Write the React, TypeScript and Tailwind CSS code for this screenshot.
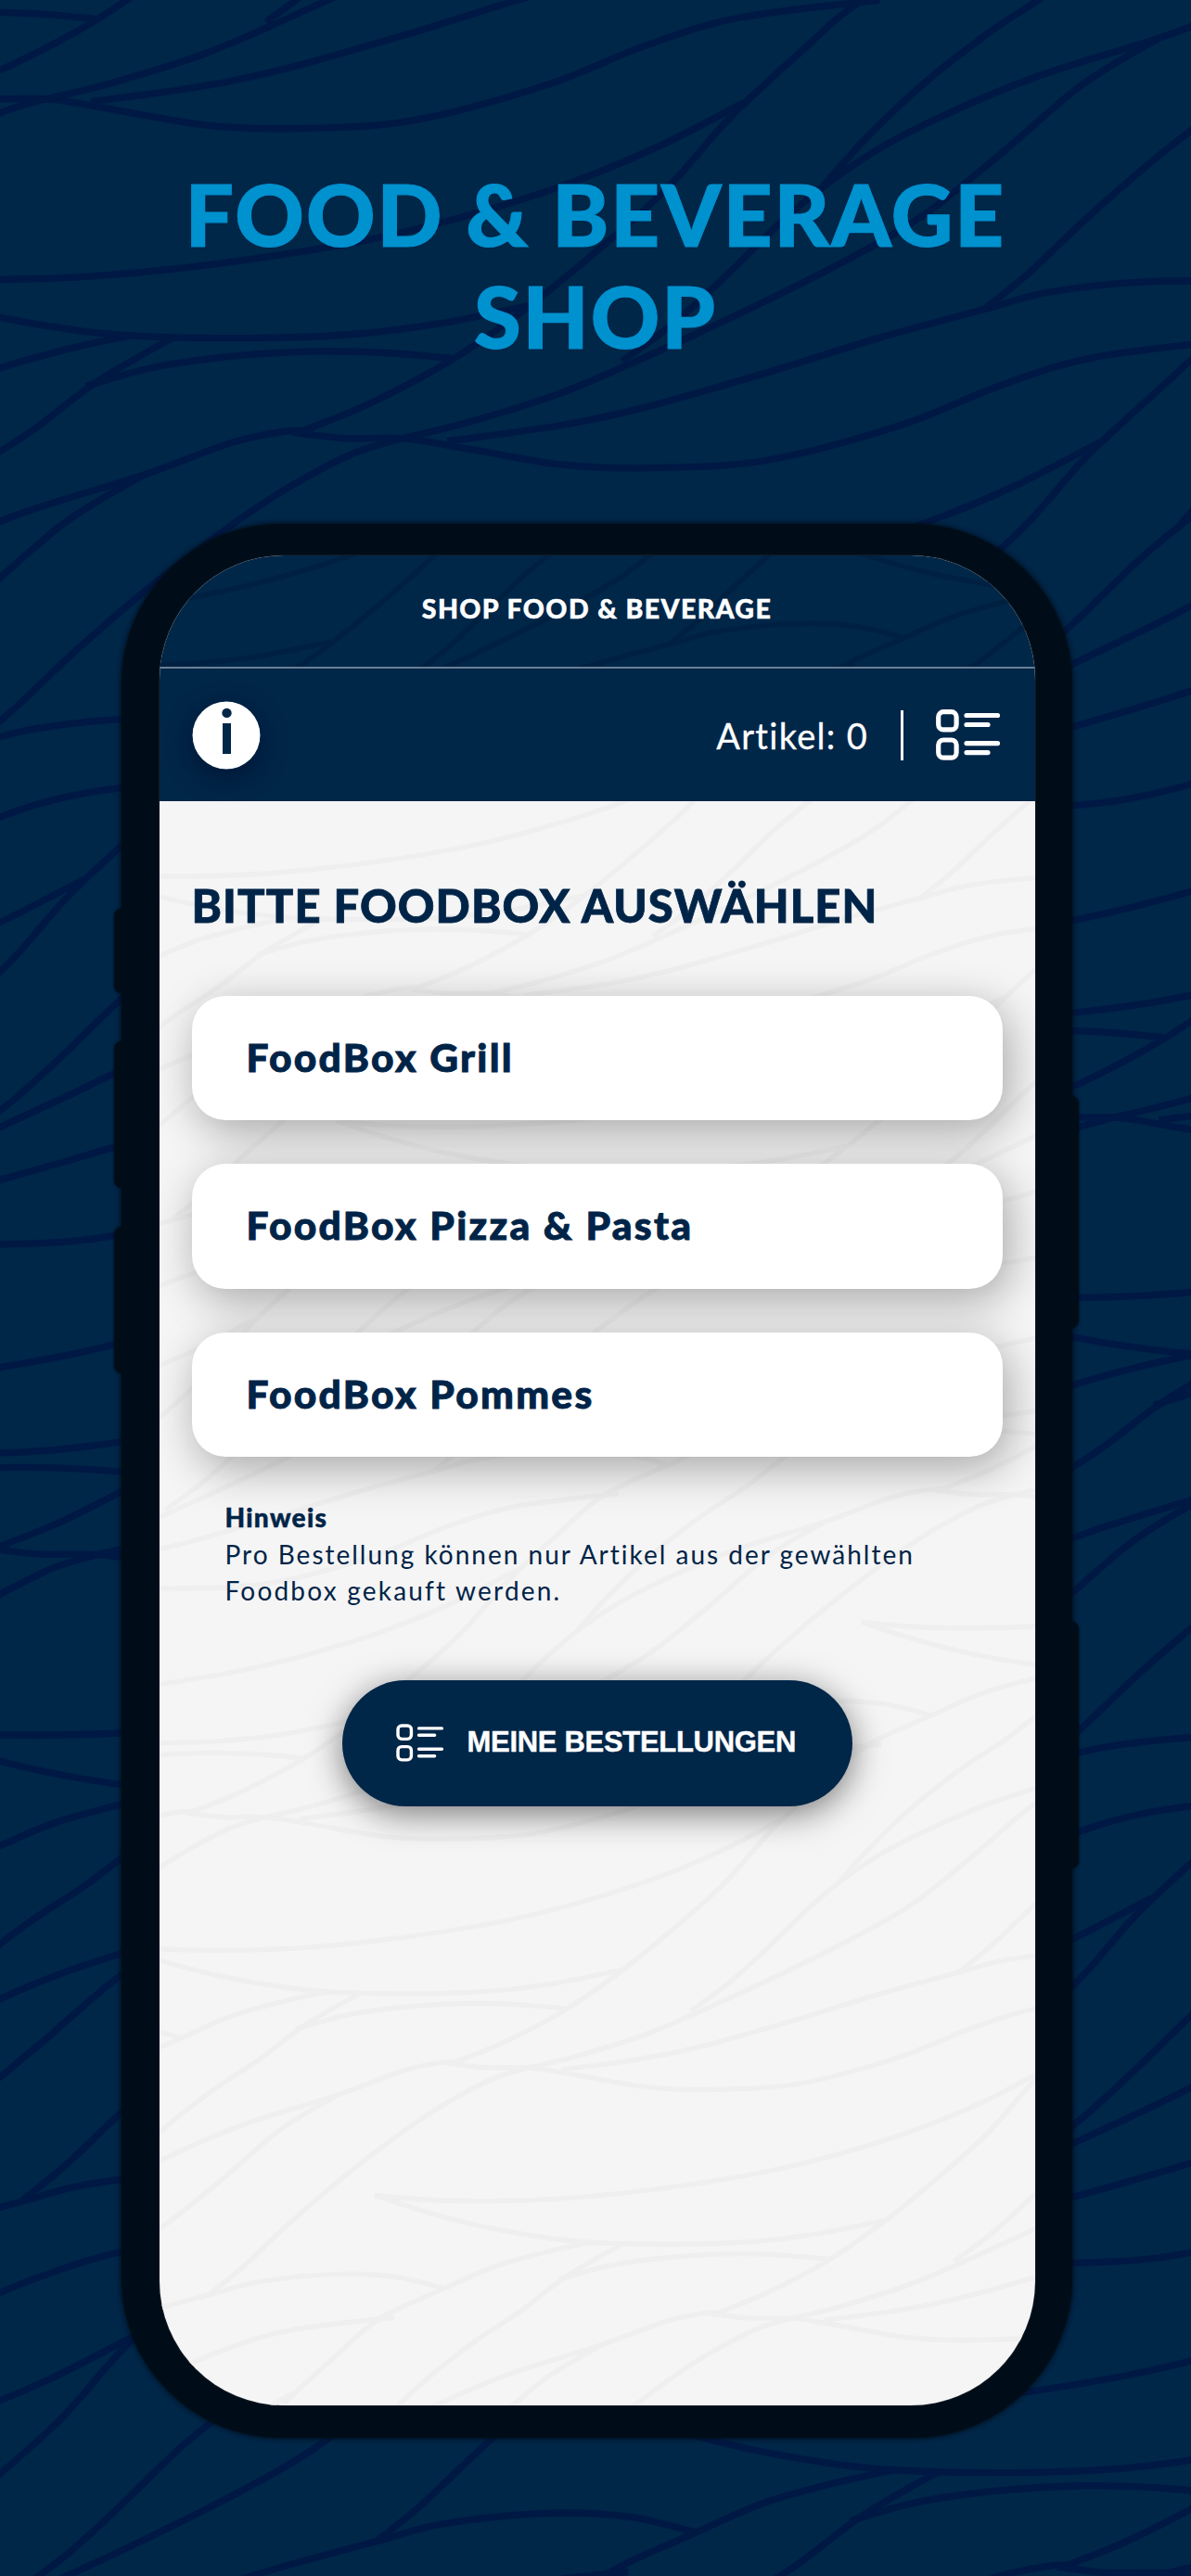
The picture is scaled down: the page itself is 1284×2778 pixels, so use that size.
type Point = [number, number];

const foodBoxes = ["FoodBox Grill", "FoodBox Pizza & Pasta", "FoodBox Pommes"];

/* One repeat of the wave pattern, each curve as a list of points */
const waves: Point[][] = [
  [[493, 683], [560, 694], [650, 697], [750, 690], [870, 668], [1000, 632], [1100, 590], [1200, 535], [1290, 470], [1374, 394]],
  [[493, 683], [560, 722], [640, 758], [730, 785], [800, 795], [910, 797], [1000, 790], [1080, 772], [1165, 742]],
  [[1767, 43], [1707, 66], [1637, 101], [1572, 151], [1487, 221], [1427, 311], [1360, 421], [1300, 540], [1230, 650], [1160, 750], [1090, 835], [1010, 910], [940, 960]],
  [[735, 880], [800, 848], [880, 828], [960, 820], [1030, 823], [1090, 832]],
  [[475, 213], [400, 290], [340, 370], [280, 440], [215, 530], [160, 622], [119, 703]],
  [[610, 374], [580, 376], [530, 395], [445, 450], [320, 520], [215, 600], [150, 665], [88, 749], [23, 859], [-27, 939], [-77, 1004]],
  [[445, 450], [370, 530], [290, 650], [215, 755], [143, 829], [53, 909], [-57, 999], [-137, 1059], [-227, 1109], [-297, 1139]],
  [[690, 390], [640, 420], [560, 500], [460, 630], [380, 750], [320, 850], [275, 915]],
  [[1572, 151], [1507, 124], [1427, 118], [1327, 136], [1262, 166], [1160, 215], [1050, 275], [930, 335], [850, 365], [740, 392]],
  [[590, 377], [640, 387], [700, 388], [760, 405], [850, 432], [935, 438], [1050, 425], [1180, 365], [1280, 295], [1370, 248], [1506, 218]],
];

const wavePath = (points: Point[]) => {
  const p = points.map(([x, y]) => [x * 0.8189, y * 0.4643]);
  let d = `M${p[0][0]} ${p[0][1]}`;
  for (let i = 0; i < p.length - 1; i++) {
    const a = p[Math.max(i - 1, 0)];
    const b = p[i];
    const c = p[i + 1];
    const e = p[Math.min(i + 2, p.length - 1)];
    d += `C${b[0] + (c[0] - a[0]) / 6} ${b[1] + (c[1] - a[1]) / 6} ${c[0] - (e[0] - b[0]) / 6} ${c[1] - (e[1] - b[1]) / 6} ${c[0]} ${c[1]}`;
  }
  return d;
};

const tile = waves.map(wavePath).join("");

const repeats: Point[] = [];
for (let u = -9; u <= 9; u++) {
  for (let v = -4; v <= 4; v++) {
    repeats.push([u * 283.3 + v * 525, u * 270.2 - v * 618]);
  }
}

function Waves({ x, y, scale = 1, className }: { x: number; y: number; scale?: number; className: string }) {
  return (
    <svg aria-hidden="true" className={`absolute inset-0 h-full w-full ${className}`} fill="none" stroke="currentColor" strokeWidth="5.4">
      <g transform={`translate(${x} ${y}) scale(${scale})`}>
        {repeats.map(([dx, dy]) => (
          <path key={`${dx},${dy}`} d={tile} transform={`translate(${dx} ${dy})`} />
        ))}
      </g>
    </svg>
  );
}

function ListIcon({ className, strokeWidth }: { className: string; strokeWidth: number }) {
  return (
    <svg aria-hidden="true" viewBox="0 0 70 55" className={className} fill="none" stroke="currentColor" strokeWidth={strokeWidth} strokeLinecap="round">
      <rect x="2.7" y="2.7" width="19.4" height="19.2" rx="5.5" />
      <rect x="2.7" y="33" width="19.4" height="19.2" rx="5.5" />
      <path d="M33 6.5h33.5M33 16.5h23M33 36.6h33.5M33 46.6h23" />
    </svg>
  );
}

export default function App() {
  return (
    <main className="relative flex h-[2778px] w-[1284px] flex-col items-center overflow-hidden bg-[#002648] font-['Lato',sans-serif] text-[#002447]">
      <Waves x={-723} y={-137} scale={1.355} className="text-[#001844]" />

      <h1 className="relative mt-[176px] h-[389px] text-center text-[92px] leading-[110px] font-black text-[#0091cf] [-webkit-text-stroke:1.2px_#0091cf]">
        <span className="block tracking-[2px]">FOOD &amp; BEVERAGE</span>
        <span className="block tracking-[2px]">SHOP</span>
      </h1>

      {/* Phone */}
      <div className="relative ml-[3px] h-[2064px] w-[1025px] rounded-[172px] bg-[#000d18] px-[40.5px] pt-[34px] pb-[35px] shadow-[0_0_5px_1px_#000d18]">
        <span className="absolute top-[415px] -left-[8px] h-[91px] w-5 rounded-lg bg-[#000d18] shadow-[0_0_3px_#000d18]" />
        <span className="absolute top-[558px] -left-[8px] h-[158px] w-5 rounded-lg bg-[#000d18] shadow-[0_0_3px_#000d18]" />
        <span className="absolute top-[758px] -left-[8px] h-[158px] w-5 rounded-lg bg-[#000d18] shadow-[0_0_3px_#000d18]" />
        <span className="absolute top-[617px] -right-[7px] h-[250px] w-5 rounded-lg bg-[#000d18] shadow-[0_0_3px_#000d18]" />
        <span className="absolute top-[1184px] -right-[7px] h-[266px] w-5 rounded-lg bg-[#000d18] shadow-[0_0_3px_#000d18]" />

        <div className="relative flex h-full flex-col overflow-hidden rounded-[134px] bg-[#f5f5f5] shadow-[0_0_0_1px_#101a24]">
          <header className="relative flex h-[122px] shrink-0 items-center justify-center overflow-hidden border-b-[2px] border-[#6a7f95] bg-[#002648] pb-[6px]">
            <Waves x={324} y={-329} className="text-[#002042]" />
            <span className="relative text-[28.5px] leading-none font-black tracking-[1.4px] text-white [-webkit-text-stroke:0.5px_white]">SHOP FOOD &amp; BEVERAGE</span>
          </header>

          <div className="relative z-10 flex h-[143px] shrink-0 items-center justify-between bg-[#002648] pr-[37px] pl-[35px] text-white">
            <svg aria-label="Info" viewBox="0 0 74 74" className="h-[74px] w-[74px] rounded-full shadow-[0_8px_26px_rgba(0,10,40,0.55)]">
              <circle cx="37" cy="37" r="36.5" fill="white" />
              <circle cx="37.5" cy="12.9" r="5.2" fill="#002648" />
              <path d="M33 24h9v33h-9z" fill="#002648" />
            </svg>
            <div className="flex items-center">
              <span className="text-[38px] leading-none tracking-[1.3px] [-webkit-text-stroke:0.3px_white]">Artikel: 0</span>
              <span className="ml-[35px] h-[54px] w-[2.5px] bg-white" />
              <ListIcon className="ml-[35px] h-[55px] w-[70px]" strokeWidth={5.2} />
            </div>
          </div>

          <div className="relative flex flex-1 flex-col px-[35px]">
            <Waves x={-172} y={1186} className="text-[#efeff0]" />

            <h2 className="relative mt-[82px] h-[128px] text-[49px] leading-[60px] font-black tracking-[1.1px] whitespace-nowrap [-webkit-text-stroke:0.8px_#002447]">BITTE FOODBOX AUSWÄHLEN</h2>

            <div className="relative flex flex-col gap-[47px]">
              {foodBoxes.map((name) => (
                <button
                  key={name}
                  type="button"
                  className="flex h-[134.4px] items-center rounded-[36px] bg-white pb-[3px] pl-[59px] text-[42.5px] font-black tracking-[2.3px] shadow-[6px_12px_48px_rgba(0,0,0,0.32)] [-webkit-text-stroke:0.9px_#002447]"
                >
                  {name}
                </button>
              ))}
            </div>

            <div className="relative mt-[46px] ml-[36px] text-[28px] leading-[39.5px] whitespace-nowrap">
              <p className="font-black tracking-[1.3px] [-webkit-text-stroke:0.5px_#002447]">Hinweis</p>
              <p className="tracking-[2px]">Pro Bestellung können nur Artikel aus der gewählten</p>
              <p className="tracking-[2.2px]">Foodbox gekauft werden.</p>
            </div>

            <button
              type="button"
              className="relative mt-[76px] flex h-[136px] w-[550px] items-center self-center rounded-full bg-[#002648] pl-[58px] text-white shadow-[0_8px_36px_rgba(0,0,0,0.5)]"
            >
              <ListIcon className="h-[41px] w-[52px]" strokeWidth={4.6} />
              <span className="ml-[25px] font-['Liberation_Sans',Arial,sans-serif] text-[31px] font-bold tracking-[-0.3px] whitespace-nowrap [-webkit-text-stroke:0.4px_white]">MEINE BESTELLUNGEN</span>
            </button>
          </div>
        </div>
      </div>
    </main>
  );
}
